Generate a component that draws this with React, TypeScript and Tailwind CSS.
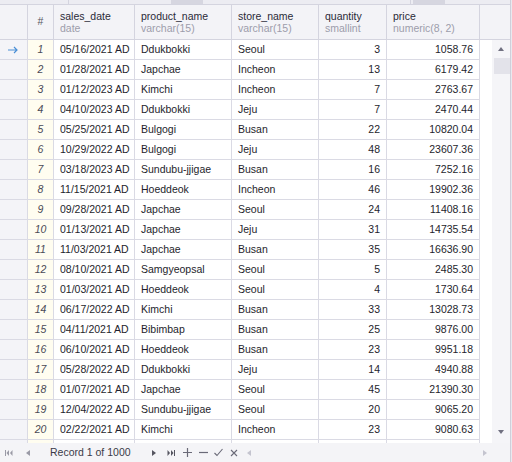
import React from "react";

type Row = [string, string, string, number, string];

const ROWS: Row[] = [
  ["05/16/2021 AD", "Ddukbokki", "Seoul", 3, "1058.76"],
  ["01/28/2021 AD", "Japchae", "Incheon", 13, "6179.42"],
  ["01/12/2023 AD", "Kimchi", "Incheon", 7, "2763.67"],
  ["04/10/2023 AD", "Ddukbokki", "Jeju", 7, "2470.44"],
  ["05/25/2021 AD", "Bulgogi", "Busan", 22, "10820.04"],
  ["10/29/2022 AD", "Bulgogi", "Jeju", 48, "23607.36"],
  ["03/18/2023 AD", "Sundubu-jjigae", "Busan", 16, "7252.16"],
  ["11/15/2021 AD", "Hoeddeok", "Incheon", 46, "19902.36"],
  ["09/28/2021 AD", "Japchae", "Seoul", 24, "11408.16"],
  ["01/13/2021 AD", "Japchae", "Jeju", 31, "14735.54"],
  ["11/03/2021 AD", "Japchae", "Busan", 35, "16636.90"],
  ["08/10/2021 AD", "Samgyeopsal", "Seoul", 5, "2485.30"],
  ["01/03/2021 AD", "Hoeddeok", "Seoul", 4, "1730.64"],
  ["06/17/2022 AD", "Kimchi", "Busan", 33, "13028.73"],
  ["04/11/2021 AD", "Bibimbap", "Busan", 25, "9876.00"],
  ["06/10/2021 AD", "Hoeddeok", "Busan", 23, "9951.18"],
  ["05/28/2022 AD", "Ddukbokki", "Jeju", 14, "4940.88"],
  ["01/07/2021 AD", "Japchae", "Seoul", 45, "21390.30"],
  ["12/04/2022 AD", "Sundubu-jjigae", "Seoul", 20, "9065.20"],
  ["02/22/2021 AD", "Kimchi", "Incheon", 23, "9080.63"],
];

const COLS = "grid grid-cols-[28px_26px_81px_97px_87px_68px_93px]";
const cell = "border-r border-[#dadae4] flex items-center";

function HeaderCell({ name, type }: { name: string; type: string }) {
  return (
    <div className="border-r border-[#d4d4df] flex flex-col justify-center pl-[6px] leading-[12px]">
      <span className="text-[#2a2a38]">{name}</span>
      <span className="text-[#9d9dab]">{type}</span>
    </div>
  );
}

function Tri({ dir, className = "" }: { dir: "l" | "r" | "u" | "d"; className?: string }) {
  const pts = {
    l: "5,0 5,6 1,3",
    r: "1,0 1,6 5,3",
    u: "0,5 6,5 3,1",
    d: "0,1 6,1 3,5",
  }[dir];
  return (
    <svg width="6" height="6" viewBox="0 0 6 6" className={className}>
      <polygon points={pts} fill="currentColor" />
    </svg>
  );
}

export default function App() {
  return (
    <div
      className="w-[512px] h-[462px] bg-[#e9e9ef] overflow-hidden text-[10.5px]"
      style={{ fontFamily: '"Liberation Sans", Arial, sans-serif' }}
    >
      <div className="w-[511px] h-full flex flex-col border-r border-[#cfcfda] bg-white">
        {/* strip from the view above */}
        <div className="h-[5px] bg-[#ececf2] border-b border-[#d4d4df] flex">
          <div className="w-[69px] border-r border-[#d4d4df]" />
          <div className="w-[102px]" />
          <div className="w-[32px] bg-[#d6d6e0]" />
          <div className="w-[208px] border-r border-[#d4d4df]" />
          <div className="w-[2px]" />
          <div className="w-[32px] bg-[#d6d6e0]" />
        </div>

        {/* header */}
        <div className="h-[35px] flex bg-[#f3f3f7] border-b border-[#d4d4df]">
          <div className={COLS + " w-[480px]"}>
            <div className="border-r border-[#d4d4df]" />
            <div className="border-r border-[#d4d4df] flex items-center justify-center text-[#555562]">#</div>
            <HeaderCell name="sales_date" type="date" />
            <HeaderCell name="product_name" type="varchar(15)" />
            <HeaderCell name="store_name" type="varchar(15)" />
            <HeaderCell name="quantity" type="smallint" />
            <HeaderCell name="price" type="numeric(8, 2)" />
          </div>
          <div className="flex-1" />
        </div>

        {/* body */}
        <div className="h-[403px] flex overflow-hidden">
          <div className="w-[480px] flex flex-col">
            {ROWS.concat([["", "", "", 0, ""]]).map((r, i) => (
              <div key={i} className={COLS + " h-[20px] shrink-0 border-b border-[#dadae4] text-[#1e1e2c]"}>
                <div className={cell + " justify-center bg-[#f4f4f8] text-[#4a8fd6]"}>
                  {i === 0 && (
                    <svg width="11" height="8" viewBox="0 0 11 8">
                      <path d="M0 4h9M6 1l3 3-3 3" stroke="currentColor" strokeWidth="1.2" fill="none" />
                    </svg>
                  )}
                </div>
                <div className={cell + " justify-center bg-[#fffdf0] italic text-[#4a4a56]"}>
                  {i < ROWS.length ? i + 1 : ""}
                </div>
                <div className={cell + " pl-[6px]"}>{r[0]}</div>
                <div className={cell + " pl-[6px]"}>{r[1]}</div>
                <div className={cell + " pl-[6px]"}>{r[2]}</div>
                <div className={cell + " justify-end pr-[6px]"}>{r[3] || ""}</div>
                <div className={cell + " justify-end pr-[6px]"}>{r[4]}</div>
              </div>
            ))}
          </div>
          <div className="w-[12px]" />
          {/* vertical scrollbar */}
          <div className="w-[18px] bg-[#f5f5f8] flex flex-col items-center text-[#707080]">
            <div className="h-[18px] flex items-center justify-center">
              <Tri dir="u" />
            </div>
            <div className="w-[16px] h-[16px] bg-[#e3e3ea] ml-[2px]" />
            <div className="flex-1" />
            <div className="h-[18px] flex items-center justify-center mb-[2px]">
              <Tri dir="d" />
            </div>
          </div>
        </div>

        {/* navigator bar */}
        <div className="flex-1 bg-[#f4f4f7] flex items-center text-[#9a9aa6]">
          <div className="w-[240px] flex items-center">
            <svg width="8" height="6" viewBox="0 0 8 6" className="ml-[5px]">
              <rect x="0" y="0" width="1" height="6" fill="currentColor" />
              <polygon points="4,0 4,6 1.5,3" fill="currentColor" />
              <polygon points="7.5,0 7.5,6 5,3" fill="currentColor" />
            </svg>
            <Tri dir="l" className="ml-[12px]" />
            <span className="ml-[19px] text-[#3a3a48] text-[10.5px]">Record 1 of 1000</span>
            <Tri dir="r" className="ml-[20px] text-[#555560]" />
            <svg width="8" height="6" viewBox="0 0 8 6" className="ml-[10px] text-[#555560]">
              <polygon points="0.5,0 0.5,6 3,3" fill="currentColor" />
              <polygon points="4,0 4,6 6.5,3" fill="currentColor" />
              <rect x="7" y="0" width="1" height="6" fill="currentColor" />
            </svg>
            <svg width="9" height="9" viewBox="0 0 9 9" className="ml-[8px] text-[#6a6a78]">
              <path d="M4.5 0v9M0 4.5h9" stroke="currentColor" strokeWidth="1.2" />
            </svg>
            <svg width="9" height="9" viewBox="0 0 9 9" className="ml-[7px] text-[#6a6a78]">
              <path d="M0 4.5h9" stroke="currentColor" strokeWidth="1.2" />
            </svg>
            <svg width="9" height="9" viewBox="0 0 9 9" className="ml-[6px] text-[#6a6a78]">
              <path d="M0.5 5l2.5 2.5L8.5 1" stroke="currentColor" strokeWidth="1.1" fill="none" />
            </svg>
            <svg width="8" height="8" viewBox="0 0 8 8" className="ml-[7px] text-[#6a6a78]">
              <path d="M1 1l6 6M7 1L1 7" stroke="currentColor" strokeWidth="1.1" />
            </svg>
          </div>
          <div className="flex-1 flex items-center justify-between pl-[6px] pr-[22px] text-[#c4c4cf]">
            <Tri dir="l" />
            <Tri dir="r" />
          </div>
        </div>
      </div>
    </div>
  );
}
